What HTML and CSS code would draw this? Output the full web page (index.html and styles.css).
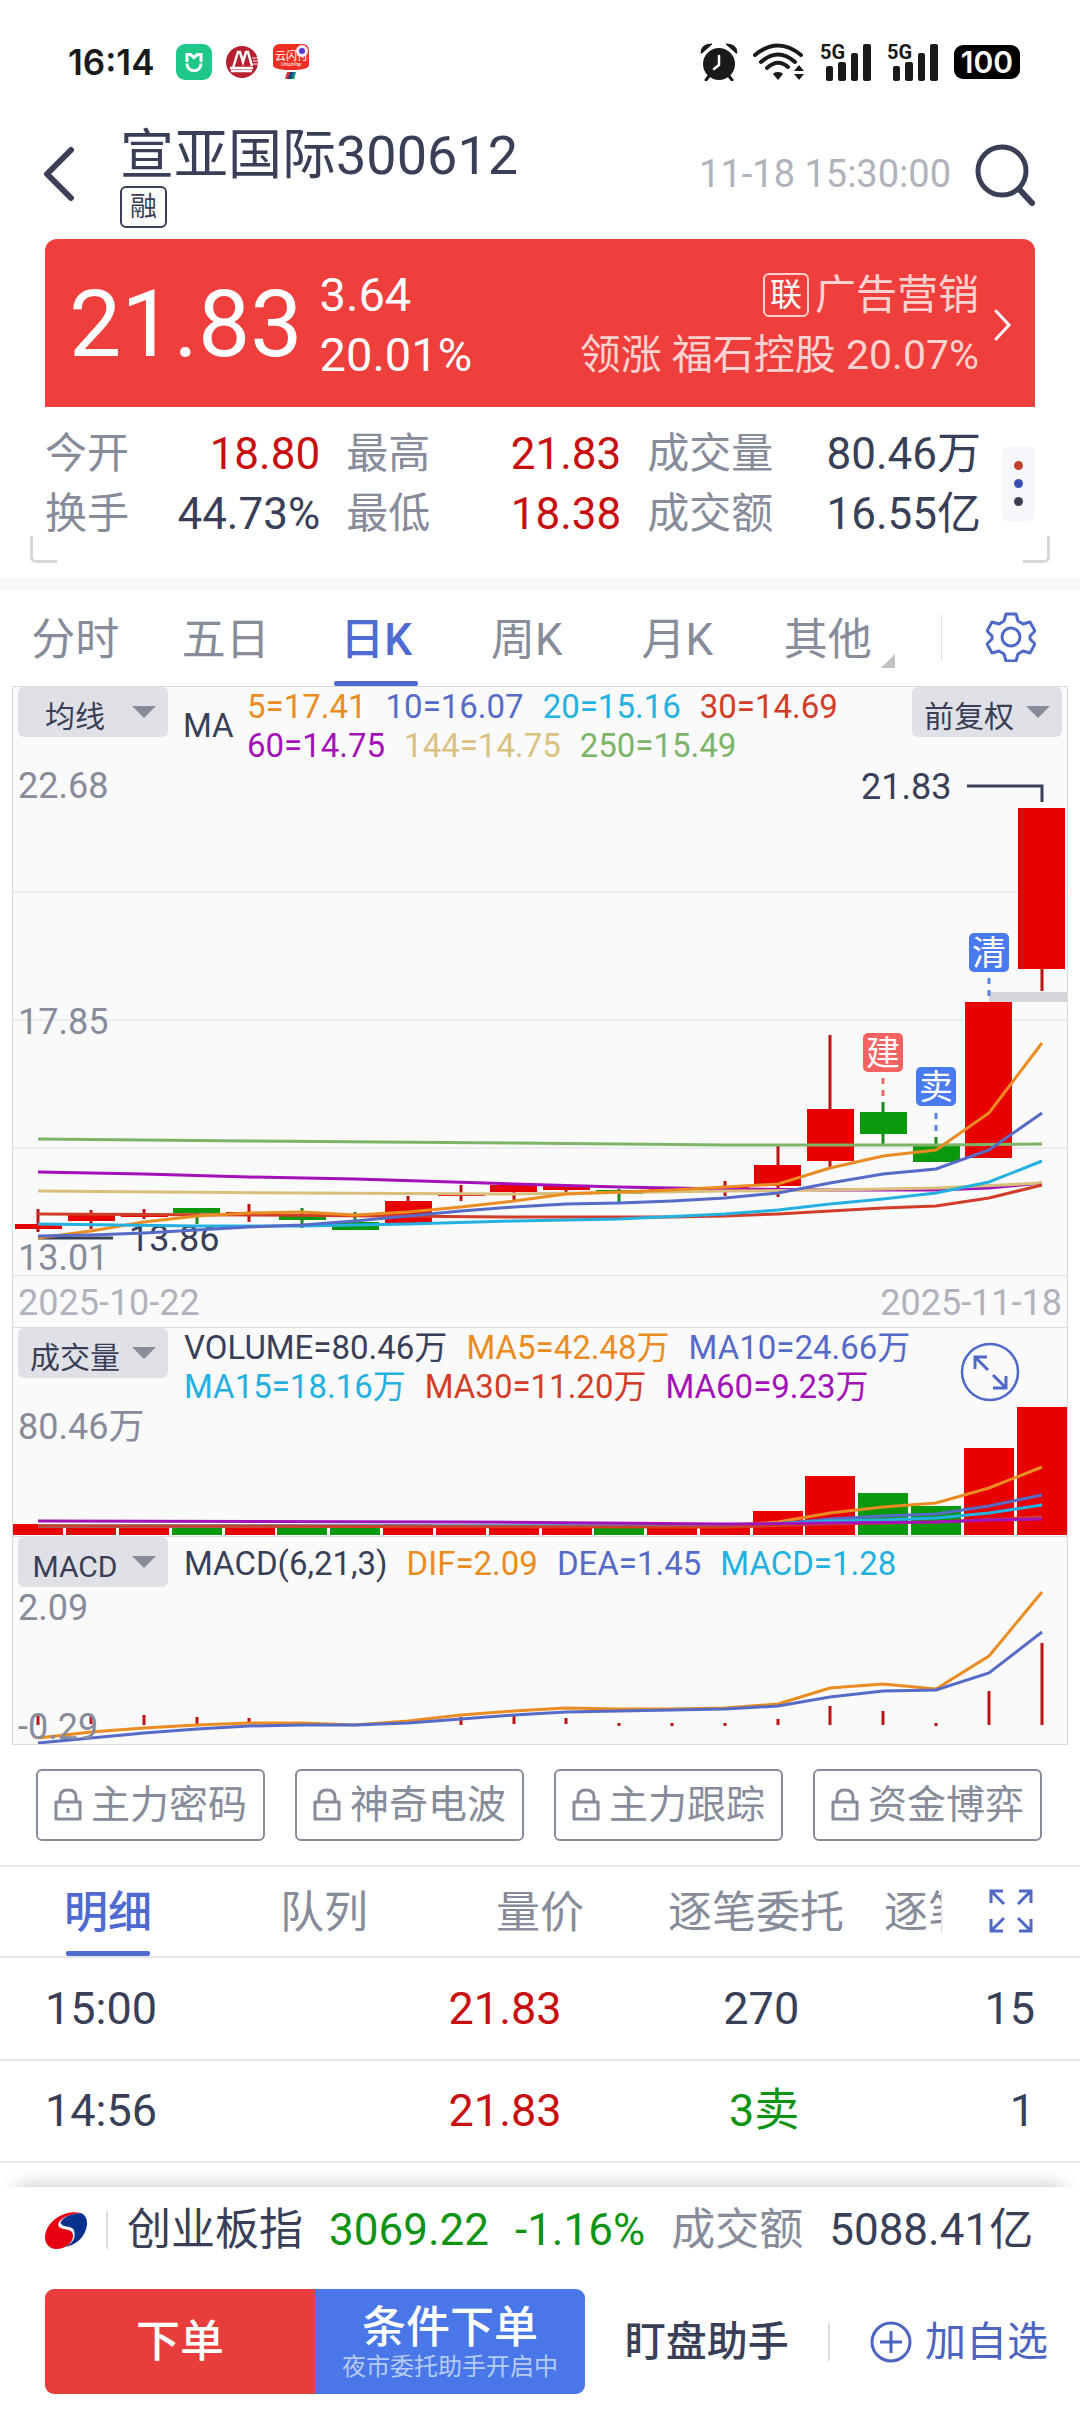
FILE: index.html
```html
<!DOCTYPE html>
<html lang="zh-CN">
    <head>
        <title>宣亚国际 300612</title>
        <meta charset="utf-8">
        <meta name="viewport" content="width=device-width, initial-scale=1.0">
        <link rel="stylesheet" href="styles.css">
    </head>
    <body>
        <div class="status">
            <span class="clock">16:14</span>
            <div class="status-apps">
                <svg width="36" height="36" viewBox="0 0 36 36"><rect width="36" height="36" rx="9" fill="#1fc789"/><path d="M11 18v-7.500l3.500 0 3.500 3 3.500-3h3.500V18M11 19.500c0 9.500 14 9.500 14 0" fill="none" stroke="#fff" stroke-width="3"/></svg>
                <svg width="32" height="32" viewBox="0 0 32 32"><circle cx="16" cy="16" r="16" fill="#b8202f"/><path d="M7 22l5-16h2l3 10 3-10h2l4 14M4 22h23M5 25h21" fill="none" stroke="#fff" stroke-width="2.500"/><path d="M12 20l1-7 2 7zM20 20l1-7 2 7z" fill="#b8202f"/><path d="M26 12h6M27 15h5M27 18h5" stroke="#fff" stroke-width="1"/></svg>
                <svg width="38" height="36" viewBox="0 0 38 36"><path d="M8 0h22q7 0 7 7v14q0 5-18 5T1 21V7q0-7 7-7z" fill="#ee3024"/><text x="3" y="16" class="pay-name">云闪付</text><text x="9" y="22" class="pay-sub">UnionPay</text><circle cx="30" cy="7" r="6" fill="#f4ecff"/><circle cx="30" cy="7" r="3" fill="#5338d8"/><path d="M15 28h4l-2 7h-4z" fill="#d33"/><path d="M18 28h4l-2 7h-4z" fill="#14437e"/><path d="M21 28h3l-2 7h-3z" fill="#0d7f79"/></svg>
            </div>
            <div class="status-icons">
                <svg width="38" height="38" viewBox="0 0 38 38" fill="#1a1a1a"><circle cx="19" cy="21" r="16"/><path d="M1 10Q1 1 12 1L2 10zM37 10Q37 1 26 1l10 9z" stroke="#1a1a1a" stroke-linejoin="round"/><path d="M9 33l-3 4M29 33l3 4" stroke="#1a1a1a" stroke-width="3" stroke-linecap="round"/><path d="M19 13v9l-5 4" fill="none" stroke="#fff" stroke-width="2.500" stroke-linecap="round"/></svg>
                <svg width="52" height="38" viewBox="0 0 52 38" fill="none" stroke="#1a1a1a" stroke-width="4" stroke-linecap="round"><path d="M2 12Q25-7 48 12M8 19Q25 4 42 19M14 25Q25 15 35 24"/><path d="M25 29q4 0 5 2l-5 6-5-6q1-2 5-2z" fill="#1a1a1a" stroke="none"/><path d="M41 28l5-6 5 6zM41 31h10l-5 6z" fill="#1a1a1a" stroke="none"/></svg>
                <svg class="signal" width="52" height="38" viewBox="0 0 52 38" fill="#1a1a1a"><text x="0" y="16" class="net">5G</text><rect x="6" y="23" width="7" height="15" rx="2"/><rect x="18" y="19" width="8" height="19" rx="2"/><rect x="31" y="10" width="7" height="28" rx="2"/><rect x="43" y="1" width="8" height="37" rx="2"/></svg>
                <svg class="signal" width="52" height="38" viewBox="0 0 52 38" fill="#1a1a1a"><text x="0" y="16" class="net">5G</text><rect x="6" y="23" width="7" height="15" rx="2"/><rect x="18" y="19" width="8" height="19" rx="2"/><rect x="31" y="10" width="7" height="28" rx="2"/><rect x="43" y="1" width="8" height="37" rx="2"/></svg>
                <span class="battery">100</span>
            </div>
        </div>

        <header class="header">
            <a href="#" class="back" aria-label="返回">
                <svg width="32" height="56" viewBox="0 0 32 56"><path d="M28 4L4 28l24 24" fill="none" stroke="#393f57" stroke-width="6" stroke-linecap="round" stroke-linejoin="round"/></svg>
            </a>
            <div class="name">
                <h1>宣亚国际300612</h1>
                <span class="tag">融</span>
            </div>
            <time class="time">11-18 15:30:00</time>
            <button type="button" class="icon-btn" aria-label="搜索">
                <svg width="62" height="64" viewBox="0 0 62 64" fill="none" stroke="#393f57"><circle cx="27" cy="29" r="24" stroke-width="5"/><path d="M44 47l13 14" stroke-width="6" stroke-linecap="round"/></svg>
            </button>
        </header>

        <section class="quote">
            <strong class="price">21.83</strong>
            <div class="change"><span>3.64</span><span>20.01%</span></div>
            <div class="sector">
                <div class="sector-name"><span class="link-tag">联</span>广告营销</div>
                <div>领涨 福石控股 20.07%</div>
            </div>
            <svg width="20" height="34" viewBox="0 0 20 34"><path d="M3 3l13 14L3 31" fill="none" stroke="#fff" stroke-width="3" stroke-linecap="round"/></svg>
        </section>

        <section class="stats">
            <dl class="stat-grid">
                <dt>今开</dt><dd class="up">18.80</dd>
                <dt>最高</dt><dd class="up">21.83</dd>
                <dt>成交量</dt><dd>80.46万</dd>
                <dt>换手</dt><dd>44.73%</dd>
                <dt>最低</dt><dd class="up">18.38</dd>
                <dt>成交额</dt><dd>16.55亿</dd>
            </dl>
            <button type="button" class="more" aria-label="更多"><i class="dot dot-red"></i><i class="dot dot-blue"></i><i class="dot"></i></button>
            <span class="corner corner-left"></span>
            <span class="corner corner-right"></span>
        </section>

        <nav class="periods">
            <div class="period-list">
                <a href="#">分时</a>
                <a href="#">五日</a>
                <a href="#" class="active">日K</a>
                <a href="#">周K</a>
                <a href="#">月K</a>
                <a href="#" class="other">其他</a>
            </div>
            <button type="button" class="side-btn" aria-label="设置">
                <svg width="50" height="50" viewBox="0 0 50 50" fill="none" stroke="#5069c8" stroke-width="3" stroke-linejoin="round"><path d="M20 2h10l2 7 5 3 7-2 5 9-5 5v3l5 5-5 9-7-2-5 3-2 7H20l-2-7-5-3-7 2-5-9 5-5v-3l-5-5 5-9 7 2 5-3z"/><circle cx="25" cy="25" r="9"/></svg>
            </button>
        </nav>

        <main class="charts">
            <section class="panel">
                <svg class="plot" viewBox="13 687 1054 588">
                    <path class="grid" d="M13 892h1054M13 1020h1054M13 1148h1054"/>
                    <rect x="989" y="992" width="78" height="10" fill="#d5d6dc"/>
                    <path class="lead" d="M967 786h75v16M38 1238h75"/>
                    <text class="mark" x="861" y="799">21.83</text>
                    <text class="mark" x="129" y="1251">13.86</text>
                    <path class="wick" d="M38 1209v23M91 1210v19M144 1209v10M249 1204v18M408 1196v28M461 1185v16M514 1185v15M566 1184v8M672 1188v4M725 1181v15M778 1146v51M830 1035v132M1042 969v22"/>
                    <path class="wick wick-down" d="M197 1208v16M302 1208v20M355 1212v18M619 1189v15M883 1102v42M936 1137v25"/>
                    <g class="bar">
                        <rect x="15" y="1224" width="47" height="5"/>
                        <rect x="68" y="1215" width="47" height="6"/>
                        <rect x="121" y="1214" width="47" height="3"/>
                        <rect x="226" y="1212" width="47" height="2"/>
                        <rect x="385" y="1201" width="47" height="22"/>
                        <rect x="438" y="1194" width="47" height="2"/>
                        <rect x="490" y="1185" width="47" height="7"/>
                        <rect x="543" y="1186" width="47" height="4"/>
                        <rect x="649" y="1189" width="47" height="2"/>
                        <rect x="702" y="1187" width="47" height="2"/>
                        <rect x="754" y="1165" width="47" height="21"/>
                        <rect x="807" y="1109" width="47" height="52"/>
                        <rect x="965" y="1002" width="47" height="156"/>
                        <rect x="1018" y="808" width="47" height="161"/>
                    </g>
                    <g class="bar bar-down">
                        <rect x="173" y="1208" width="47" height="5"/>
                        <rect x="279" y="1215" width="47" height="5"/>
                        <rect x="332" y="1222" width="47" height="8"/>
                        <rect x="596" y="1190" width="47" height="4"/>
                        <rect x="860" y="1112" width="47" height="22"/>
                        <rect x="913" y="1146" width="47" height="16"/>
                    </g>
                    <polyline class="line c250" points="38,1139 249,1141 514,1143 725,1145 936,1145 1042,1144"/>
                    <polyline class="line c60" points="38,1172 144,1174 249,1177 355,1179 514,1184 619,1187 725,1189 830,1190 936,1190 989,1188 1042,1183"/>
                    <polyline class="line c144" points="38,1191 302,1193 514,1194 725,1191 830,1190 936,1188 1042,1183"/>
                    <polyline class="line c30" points="38,1214 249,1215 514,1217 672,1217 725,1216 778,1214 830,1211 883,1208 936,1206 989,1198 1042,1185"/>
                    <polyline class="line c5" points="38,1238 91,1231 144,1222 197,1216 249,1213 302,1212 355,1215 408,1212 461,1207 514,1201 566,1194 619,1192 672,1190 725,1187 778,1184 830,1168 883,1156 936,1150 989,1113 1042,1043"/>
                    <polyline class="line c20" points="38,1224 197,1226 302,1226 408,1224 514,1221 619,1219 725,1214 778,1210 830,1204 883,1199 936,1193 989,1182 1042,1161"/>
                    <polyline class="line c10" points="38,1236 91,1235 144,1233 197,1230 249,1227 302,1225 355,1221 408,1216 461,1211 514,1207 566,1204 619,1203 672,1201 725,1198 778,1193 830,1183 883,1174 936,1169 989,1150 1042,1113"/>
                    <path class="dash dash-build" d="M883 1078v18"/>
                    <path class="dash" d="M936 1113v18M989 978v18"/>
                    <rect class="sig sig-build" x="863" y="1033" width="40" height="39" rx="5"/>
                    <rect class="sig" x="916" y="1067" width="40" height="39" rx="5"/>
                    <rect class="sig" x="969" y="933" width="40" height="39" rx="5"/>
                    <text class="sig-text" x="883" y="1065">建</text>
                    <text class="sig-text" x="936" y="1099">卖</text>
                    <text class="sig-text" x="989" y="965">清</text>
                </svg>
                <div class="panel-head">
                    <span class="picker"><select aria-label="主图指标"><option>均线</option></select></span>
                    <span class="ma-name">MA</span>
                    <div class="legend">
                        <span class="t5">5=17.41</span><span class="t10">10=16.07</span><span class="t20">20=15.16</span><span class="t30">30=14.69</span>
                        <span class="t60">60=14.75</span><span class="t144">144=14.75</span><span class="t250">250=15.49</span>
                    </div>
                    <span class="picker"><select aria-label="复权"><option>前复权</option></select></span>
                </div>
                <div class="axis"><span>22.68</span><span>17.85</span><span>13.01</span></div>
            </section>

            <div class="dates"><span>2025-10-22</span><span>2025-11-18</span></div>

            <section class="panel">
                <svg class="plot" viewBox="13 1328 1054 208">
                    <g class="bar">
                        <rect x="13" y="1524" width="50" height="11"/>
                        <rect x="66" y="1527" width="50" height="8"/>
                        <rect x="119" y="1527" width="50" height="8"/>
                        <rect x="225" y="1527" width="50" height="8"/>
                        <rect x="383" y="1524" width="50" height="11"/>
                        <rect x="436" y="1527" width="50" height="8"/>
                        <rect x="489" y="1527" width="50" height="8"/>
                        <rect x="542" y="1527" width="50" height="8"/>
                        <rect x="647" y="1527" width="50" height="8"/>
                        <rect x="700" y="1527" width="50" height="8"/>
                        <rect x="753" y="1511" width="50" height="24"/>
                        <rect x="805" y="1476" width="50" height="59"/>
                        <rect x="964" y="1448" width="50" height="87"/>
                        <rect x="1017" y="1407" width="50" height="128"/>
                    </g>
                    <g class="bar bar-down">
                        <rect x="172" y="1527" width="50" height="8"/>
                        <rect x="277" y="1527" width="50" height="8"/>
                        <rect x="330" y="1527" width="50" height="8"/>
                        <rect x="594" y="1527" width="50" height="8"/>
                        <rect x="858" y="1493" width="50" height="42"/>
                        <rect x="911" y="1506" width="50" height="29"/>
                    </g>
                    <polyline class="line c5" points="38,1526 725,1526 778,1522 830,1513 883,1507 936,1503 989,1488 1042,1467"/>
                    <polyline class="line c10" points="38,1526 725,1526 778,1524 830,1519 883,1516 936,1514 989,1506 1042,1495"/>
                    <polyline class="line c20" points="38,1526 725,1526 830,1521 883,1520 936,1518 989,1513 1042,1505"/>
                    <polyline class="line c30" points="38,1526 725,1527 830,1524 936,1522 1042,1517"/>
                    <polyline class="line c60" points="38,1521 461,1522 725,1524 830,1523 936,1522 989,1520 1042,1519"/>
                </svg>
                <div class="panel-head">
                    <span class="picker"><select aria-label="副图指标一"><option>成交量</option></select></span>
                    <div class="legend">
                        <span>VOLUME=80.46万</span><span class="t5">MA5=42.48万</span><span class="t10">MA10=24.66万</span>
                        <span class="t20">MA15=18.16万</span><span class="t30">MA30=11.20万</span><span class="t60">MA60=9.23万</span>
                    </div>
                    <button type="button" class="zoom-btn" aria-label="横屏">
                        <svg width="60" height="60" viewBox="0 0 60 60" fill="none" stroke="#5069c8" stroke-width="3"><circle cx="30" cy="30" r="28" stroke-width="2.500"/><path d="M15 27V15h12M16 16l12 12M33 33l12 12M46 34v12H33"/></svg>
                    </button>
                </div>
                <div class="axis"><span>80.46万</span></div>
            </section>

            <section class="panel">
                <svg class="plot" viewBox="13 1536 1054 207">
                    <path class="wick" d="M38 1715v9M91 1713v10M144 1714v10M197 1716v8M249 1717v6M461 1716v8M514 1715v8M566 1717v6M619 1722v3M672 1722v3M725 1722v3M778 1718v6M830 1705v19M883 1710v14M936 1722v3M989 1690v34M1042 1642v82"/>
                    <polyline class="line c5" points="38,1737 91,1731 144,1727 197,1724 249,1722 302,1722 355,1724 408,1720 461,1714 514,1710 566,1707 619,1708 672,1708 725,1707 778,1703 830,1687 883,1683 936,1688 989,1655 1042,1591"/>
                    <polyline class="line c10" points="38,1742 91,1737 144,1732 197,1728 249,1725 302,1724 355,1724 408,1722 461,1718 514,1714 566,1711 619,1710 672,1709 725,1708 778,1705 830,1696 883,1690 936,1689 989,1672 1042,1631"/>
                </svg>
                <div class="panel-head">
                    <span class="picker"><select aria-label="副图指标二"><option>MACD</option></select></span>
                    <div class="legend legend-single">
                        <span>MACD(6,21,3)</span><span class="t5">DIF=2.09</span><span class="t10">DEA=1.45</span><span class="t20">MACD=1.28</span>
                    </div>
                </div>
                <div class="axis axis-macd"><span>2.09</span><span>-0.29</span></div>
            </section>
        </main>

        <div class="tools">
            <button type="button"><svg class="lock" viewBox="0 0 28 34"><path d="M2 14h24v17H2zM6 14V9q0-7 8-7t8 7v5M14 20v5"/></svg>主力密码</button>
            <button type="button"><svg class="lock" viewBox="0 0 28 34"><path d="M2 14h24v17H2zM6 14V9q0-7 8-7t8 7v5M14 20v5"/></svg>神奇电波</button>
            <button type="button"><svg class="lock" viewBox="0 0 28 34"><path d="M2 14h24v17H2zM6 14V9q0-7 8-7t8 7v5M14 20v5"/></svg>主力跟踪</button>
            <button type="button"><svg class="lock" viewBox="0 0 28 34"><path d="M2 14h24v17H2zM6 14V9q0-7 8-7t8 7v5M14 20v5"/></svg>资金博弈</button>
        </div>

        <nav class="detail-tabs">
            <div class="detail-list">
                <a href="#" class="active">明细</a>
                <a href="#">队列</a>
                <a href="#">量价</a>
                <a href="#">逐笔委托</a>
                <a href="#">逐笔成交</a>
            </div>
            <button type="button" class="side-btn" aria-label="展开">
                <svg width="44" height="44" viewBox="0 0 44 44" fill="none" stroke="#5069c8" stroke-width="3"><path d="M2 14V2h12M3 3l12 12M30 2h12v12M41 3L29 15M2 30v12h12M3 41l12-12M42 30v12H30M41 41L29 29"/></svg>
            </button>
        </nav>

        <table class="trades">
            <tr><td>15:00</td><td class="up">21.83</td><td>270</td><td>15</td></tr>
            <tr><td>14:56</td><td class="up">21.83</td><td class="down">3卖</td><td>1</td></tr>
        </table>

        <footer class="footer">
            <div class="index">
                <svg width="42" height="38" viewBox="0 0 42 38"><path d="M36 2C22-2 0 9 0 27c0 6 5 11 11 11 12 0 20-10 16-17-3-5-10-2-13-5C10 10 22 3 36 2z" fill="#e60012"/><path d="M36 2C24 3 14 8 16 14c2 4 10 1 13 6 2 5 0 12-9 16C33 34 42 23 42 12c0-5-2-8-6-10z" fill="#06318c"/><path d="M15 13c1 6 10 2 13 7" fill="none" stroke="#fff" stroke-width="3"/></svg>
                <i class="rule"></i>
                <span>创业板指</span>
                <span class="down">3069.22</span>
                <span class="down">-1.16%</span>
                <span class="muted">成交额</span>
                <span>5088.41亿</span>
            </div>
            <div class="actions">
                <div class="orders">
                    <button type="button" class="order">下单</button>
                    <button type="button" class="order order-cond">条件下单<small>夜市委托助手开启中</small></button>
                </div>
                <button type="button" class="helper">盯盘助手</button>
                <i class="rule"></i>
                <button type="button" class="add">
                    <svg width="42" height="42" viewBox="0 0 42 42" fill="none" stroke="#4d64c0" stroke-width="3"><circle cx="21" cy="21" r="19"/><path d="M21 10v22M10 21h22"/></svg>加自选
                </button>
            </div>
        </footer>
    </body>
</html>
```

FILE: styles.css
```css
:root {
    --ink: #393f57;
    --muted: #878c9a;
    --faint: #b0b3bc;
    --up: #c80f0f;
    --down: #0f9314;
    --blue: #4f6bd2;
    --line: #e6e6e8;
}
* {
    box-sizing: border-box;
}
body {
    margin: 0;
    background: #fff;
    color: var(--ink);
    font-family: Roboto, "Noto Sans CJK SC", sans-serif;
    font-size: 44px;
    line-height: 60px;
}
a {
    color: inherit;
    text-decoration: none;
}
button {
    padding: 0;
    border: 0;
    background: none;
    color: inherit;
    font: inherit;
    white-space: nowrap;
}
svg {
    display: block;
    flex: none;
}
.up {
    color: var(--up);
}
.down {
    color: var(--down);
}
.muted {
    color: var(--muted);
}

/* status bar */
.status {
    display: flex;
    align-items: center;
    height: 124px;
    padding: 0 60px 0 68px;
}
.clock {
    color: #1a1a1a;
    font-family: Inter, sans-serif;
    font-size: 35px;
    font-weight: 600;
}
.status-apps,
.status-icons {
    display: flex;
    align-items: center;
    gap: 14px;
}
.status-apps {
    margin-left: 22px;
}
.status-icons {
    gap: 15px;
    margin-left: auto;
}
.signal {
    overflow: visible;
}
.pay-name {
    fill: #fff;
    font-size: 11px;
}
.pay-sub {
    fill: #fff;
    font-size: 5px;
    font-style: italic;
}
.net {
    font-size: 20px;
    font-weight: 700;
}
.battery {
    width: 66px;
    border-radius: 9px;
    background: #000;
    color: #fff;
    font-family: Inter, sans-serif;
    font-size: 30px;
    font-weight: 600;
    line-height: 34px;
    text-align: center;
}

/* stock name */
.header {
    display: flex;
    align-items: center;
    height: 115px;
    padding: 0 43px 16px;
}
.back {
    margin-right: 45px;
}
.name {
    flex: 1;
    padding-top: 6px;
}
h1 {
    margin: 0;
    font-size: 54px;
    font-weight: 400;
    line-height: 60px;
}
.tag {
    display: block;
    width: 47px;
    border: 2px solid var(--ink);
    border-radius: 6px;
    font-size: 27px;
    line-height: 38px;
    text-align: center;
}
.time {
    margin-right: 24px;
    color: var(--faint);
    font-size: 38px;
}

.quote {
    display: flex;
    align-items: center;
    height: 168px;
    margin: 0 45px;
    padding: 4px 22px 0 24px;
    border-radius: 12px 12px 0 0;
    background: #ee3f3d;
    color: #fff;
}
.price {
    margin-right: 17px;
    font-size: 93px;
    font-weight: 400;
    line-height: 120px;
}
.change {
    display: grid;
    font-size: 47px;
}
.sector {
    display: grid;
    flex: 1;
    justify-items: end;
    margin-right: 14px;
    color: #ffd2d0;
    font-size: 41px;
}
.sector-name {
    display: flex;
    align-items: center;
    gap: 6px;
}
.link-tag {
    width: 46px;
    border: 2px solid #ffd2d0;
    border-radius: 6px;
    color: #fff;
    font-size: 32px;
    line-height: 40px;
    text-align: center;
}

/* day figures */
.stats {
    position: relative;
    display: flex;
    align-items: center;
    height: 183px;
    padding: 0 45px 18px;
    border-bottom: 12px solid #f6f7fa;
}
.stat-grid {
    display: grid;
    flex: 1;
    grid-template-columns: 84px 10fr 84px 10fr 126px 11fr;
    column-gap: 26px;
    margin: 0 21px 0 0;
}
dt {
    color: var(--muted);
    font-size: 42px;
}
dd {
    margin: 0;
    text-align: right;
}
.more {
    display: grid;
    gap: 9px;
    padding: 15px 12px;
    border-radius: 6px;
    background: #f6f7fa;
}
.dot {
    width: 9px;
    height: 9px;
    border-radius: 50%;
    background: var(--ink);
}
.dot-red {
    background: #c1432f;
}
.dot-blue {
    background: #3a50b4;
}
.corner {
    position: absolute;
    bottom: 15px;
    width: 27px;
    height: 27px;
    border-bottom: 3px solid #d5d7dc;
}
.corner-left {
    left: 30px;
    border-left: 3px solid #d5d7dc;
    border-radius: 0 0 0 6px;
}
.corner-right {
    right: 30px;
    border-right: 3px solid #d5d7dc;
    border-radius: 0 0 6px;
}

/* period tabs */
.periods,
.detail-tabs {
    display: flex;
    color: var(--muted);
}
.periods {
    height: 96px;
}
.period-list {
    display: flex;
    flex: 1;
    margin-right: 38px;
}
.period-list a,
.detail-list a {
    position: relative;
    text-align: center;
}
.period-list a {
    flex: 1;
    line-height: 100px;
}
.periods .active,
.detail-tabs .active {
    color: var(--blue);
    font-weight: 500;
}
.periods .active::after,
.detail-tabs .active::after {
    content: "";
    position: absolute;
    bottom: 0;
    left: calc(50% - 42px);
    width: 84px;
    height: 5px;
    border-radius: 2px;
    background: var(--blue);
}
.other::after {
    content: "";
    position: absolute;
    right: 8px;
    bottom: 18px;
    border-bottom: 14px solid #c2c2c2;
    border-left: 14px solid transparent;
}
.side-btn {
    display: flex;
    align-items: center;
    justify-content: center;
    width: 139px;
    height: 44px;
    margin: 25px 0;
    border-left: 1px solid #dcdde0;
}

/* charts */
.charts {
    margin: 0 12px;
    border: 1px solid #dadbde;
    background: #fafafa;
}
.panel {
    display: grid;
    border-bottom: 1px solid #dadbde;
}
.panel:last-child {
    border-bottom: 0;
}
.panel > * {
    grid-area: 1 / 1;
    min-width: 0;
}
.plot {
    width: 100%;
}
.panel-head {
    display: flex;
    align-items: flex-start;
    height: 80px;
    padding: 0 5px;
}
.picker {
    position: relative;
    display: flex;
    flex: none;
}
.picker::after {
    content: "";
    position: absolute;
    top: 19px;
    right: 12px;
    border: 12px solid transparent;
    border-top-color: var(--muted);
    border-bottom: 0;
    pointer-events: none;
}
.picker select {
    width: 150px;
    height: 50px;
    padding: 0 36px 0 0;
    border: 0;
    border-radius: 6px;
    appearance: none;
    background: #e0e1e6;
    color: var(--ink);
    font: inherit;
    font-size: 30px;
    text-align: center;
    text-align-last: center;
}
.ma-name,
.legend {
    font-size: 33px;
}
.ma-name {
    width: 48px;
    margin-left: 15px;
    line-height: 78px;
}
.legend {
    display: flex;
    flex: 1;
    flex-wrap: wrap;
    align-content: flex-start;
    column-gap: 19px;
    margin-left: 16px;
    line-height: 39px;
}
.legend-single {
    line-height: 54px;
}
.zoom-btn {
    margin: 14px 42px 0 0;
}
.axis {
    display: flex;
    flex-direction: column;
    justify-content: space-between;
    padding: 82px 5px 0;
    color: var(--muted);
    font-size: 36px;
    line-height: 34px;
    pointer-events: none;
}
.axis-macd {
    padding: 54px 5px 0;
}
.dates {
    display: flex;
    justify-content: space-between;
    padding: 4px 5px 0;
    border-bottom: 1px solid #dadbde;
    color: var(--faint);
    font-size: 36px;
    line-height: 47px;
}
.grid {
    stroke: #ececee;
    stroke-width: 2;
}
.lead {
    fill: none;
    stroke: var(--ink);
    stroke-width: 3;
}
.mark {
    fill: var(--ink);
    font-size: 36px;
}
.wick {
    stroke: #b81414;
    stroke-width: 3;
}
.wick-down {
    stroke: #1a8a1f;
}
.bar {
    fill: #e80000;
}
.bar-down {
    fill: #0a980c;
}
.line {
    fill: none;
    stroke-width: 3;
}
.c5 { stroke: #ea8c22; }
.c10 { stroke: #566bc8; }
.c20 { stroke: #24b0e0; }
.c30 { stroke: #d13d28; }
.c60 { stroke: #a312b8; }
.c144 { stroke: #d8bf7c; }
.c250 { stroke: #7cb568; }
.t5 { color: #ea8c22; }
.t10 { color: #566bc8; }
.t20 { color: #24b0e0; }
.t30 { color: #d13d28; }
.t60 { color: #a312b8; }
.t144 { color: #dbc282; }
.t250 { color: #7cb568; }
.dash {
    stroke: #5a82e6;
    stroke-width: 3;
    stroke-dasharray: 6;
}
.dash-build {
    stroke: #ec6a6a;
}
.sig {
    fill: #4a7af0;
}
.sig-build {
    fill: #f46262;
}
.sig-text {
    fill: #fff;
    font-size: 34px;
    text-anchor: middle;
}

/* locked tools */
.tools {
    display: flex;
    gap: 30px;
    padding: 24px 38px 24px 36px;
}
.tools button {
    display: flex;
    flex: 1;
    align-items: center;
    justify-content: center;
    gap: 9px;
    height: 72px;
    border: 2px solid var(--muted);
    border-radius: 6px;
    color: var(--muted);
    font-size: 39px;
}
.lock {
    width: 28px;
    height: 34px;
    fill: none;
    stroke: var(--muted);
    stroke-width: 3;
    stroke-linejoin: round;
}

/* trade details */
.detail-tabs {
    height: 93px;
    border-top: 2px solid var(--line);
    border-bottom: 2px solid var(--line);
}
.detail-tabs .side-btn {
    margin: 22px 0;
}
.detail-list {
    display: flex;
    flex: 1;
    overflow: hidden;
}
.detail-list a {
    flex: 0 0 216px;
    line-height: 92px;
    white-space: nowrap;
}
.trades {
    width: 100%;
    border-collapse: collapse;
    table-layout: fixed;
    font-size: 45px;
}
.trades td {
    height: 102px;
    padding: 0;
    border-bottom: 2px solid var(--line);
    text-align: right;
}
.trades td:first-child {
    width: 28%;
    padding-left: 45px;
    text-align: left;
}
.trades td:nth-child(2) {
    width: 24%;
}
.trades td:nth-child(3) {
    width: 22%;
}
.trades td:last-child {
    padding-right: 45px;
}

/* bottom bar */
.footer {
    margin-top: 24px;
    padding: 13px 32px 18px 45px;
    background: #fff;
    box-shadow: 0 -18px 18px -18px rgba(0, 0, 0, .25);
}
.index {
    display: flex;
    align-items: center;
    gap: 19px;
    white-space: nowrap;
}
.index span + span {
    margin-left: 7px;
}
.rule {
    width: 2px;
    height: 38px;
    background: #dcdde0;
}
.actions {
    display: flex;
    align-items: center;
    justify-content: space-between;
    margin-top: 29px;
    font-size: 41px;
}
.orders {
    display: flex;
    flex: 0 0 540px;
    overflow: hidden;
    border-radius: 9px;
}
.order {
    flex: 1;
    height: 105px;
    background: #e83d3b;
    color: #fff;
    font-size: 44px;
    font-weight: 500;
    line-height: 50px;
}
.order-cond {
    background: #4a77e8;
}
.order small {
    display: block;
    color: #b7cbf8;
    font-size: 24px;
    font-weight: 400;
    line-height: 28px;
}
.helper {
    font-weight: 500;
}
.add {
    display: flex;
    align-items: center;
    gap: 13px;
    color: #4d64c0;
}
```
